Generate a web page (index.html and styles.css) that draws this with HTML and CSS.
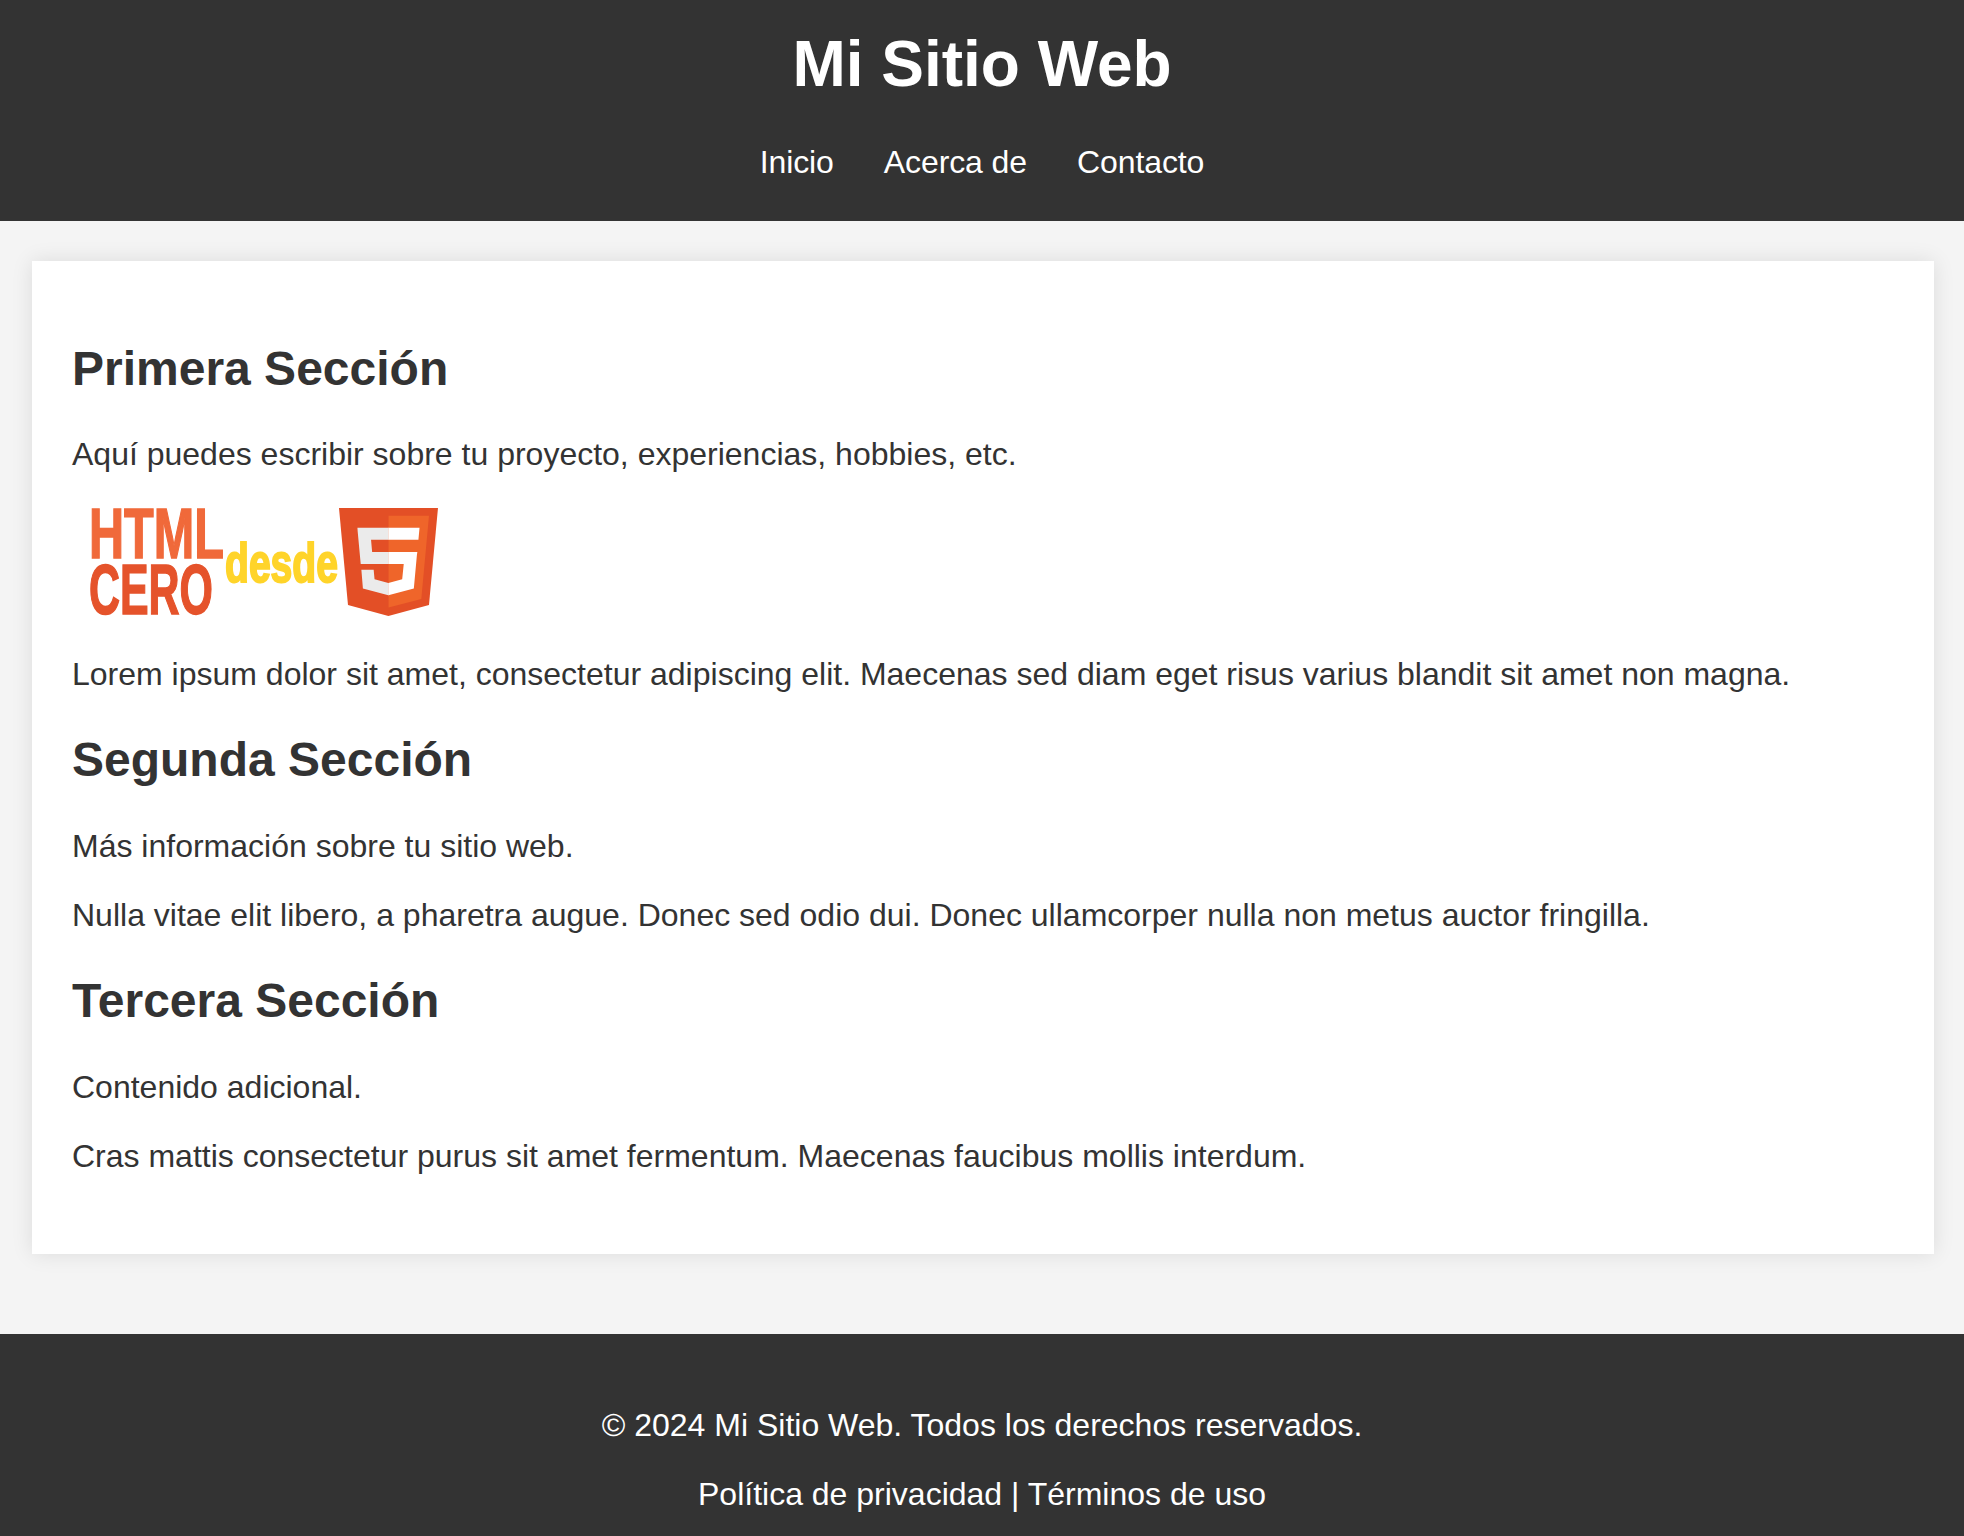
FILE: index.html
```html
<!DOCTYPE html>
<html lang="es">
<head>
  <meta charset="UTF-8" />
  <meta name="viewport" content="width=device-width, initial-scale=1" />
  <title>Mi Sitio Web</title>
  <link rel="stylesheet" href="styles.css">
</head>
<body>
  <header class="site-header">
    <h1>Mi Sitio Web</h1>
    <nav class="site-nav">
      <a href="#">Inicio</a>
      <a href="#">Acerca de</a>
      <a href="#">Contacto</a>
    </nav>
  </header>

  <main class="card">
    <section>
      <h2>Primera Sección</h2>
      <p>Aquí puedes escribir sobre tu proyecto, experiencias, hobbies, etc.</p>
      <svg class="logo" viewBox="0 0 370 118" role="img" aria-label="HTML desde cero">
        <g class="logo-art">
          <text class="logo-big" x="17" y="53" textLength="135" lengthAdjust="spacingAndGlyphs" fill="#f0693a" stroke="#f0693a">HTML</text>
          <text class="logo-big" x="17" y="109" textLength="124" lengthAdjust="spacingAndGlyphs" fill="#e5532b" stroke="#e5532b">CERO</text>
          <text class="logo-small" x="153" y="77" textLength="113" lengthAdjust="spacingAndGlyphs" fill="#ffd42a" stroke="#ffd42a">desde</text>
          <g transform="translate(260.4 3) scale(0.2195 0.211)">
            <polygon fill="#e34f26" points="71,460 30,0 481,0 440,460 255,512"/>
            <polygon fill="#ef652a" points="256,472 405,431 440,37 256,37"/>
            <polygon fill="#ebebeb" points="256,208 181,208 176,150 256,150 256,94 114,94 115,109 129,265 256,265"/>
            <polygon fill="#ebebeb" points="256,355 255,355 192,338 188,293 132,293 139,382 255,414 256,414"/>
            <polygon fill="#ffffff" points="255,208 255,265 325,265 318,338 255,355 255,414 371,382 385,223 387,208"/>
            <polygon fill="#ffffff" points="255,94 255,150 392,150 397,94"/>
          </g>
        </g>
      </svg>
      <p>Lorem ipsum dolor sit amet, consectetur adipiscing elit. Maecenas sed diam eget risus varius blandit sit amet non magna.</p>
    </section>
    <section>
      <h2>Segunda Sección</h2>
      <p>Más información sobre tu sitio web.</p>
      <p>Nulla vitae elit libero, a pharetra augue. Donec sed odio dui. Donec ullamcorper nulla non metus auctor fringilla.</p>
    </section>
    <section>
      <h2>Tercera Sección</h2>
      <p>Contenido adicional.</p>
      <p>Cras mattis consectetur purus sit amet fermentum. Maecenas faucibus mollis interdum.</p>
    </section>
  </main>

  <footer class="site-footer">
    <p>© 2024 Mi Sitio Web. Todos los derechos reservados.</p>
    <p><a href="#">Política de privacidad</a> | <a href="#">Términos de uso</a></p>
  </footer>
</body>
</html>
```

FILE: styles.css
```css
html, body {
  height: 1536px;
  overflow: hidden;
}

body {
  margin: 0;
  background-color: #f4f4f4;
  font-family: "Liberation Sans", Arial, sans-serif;
  font-size: 32px;
  line-height: 37px;
  color: #333;
}

.site-header {
  background: #333;
  color: #fff;
  text-align: center;
  height: 221px;
  padding-top: 25px;
  box-sizing: border-box;
}

h1 {
  margin: 0;
  font-size: 64px;
  line-height: 78px;
}

.site-nav {
  display: flex;
  justify-content: center;
  gap: 50px;
  margin-top: 41px;
  letter-spacing: -0.1px;
}

a {
  color: #fff;
  text-decoration: none;
}

.card {
  margin: 40px 30px 80px 32px;
  padding: 41px 40px 40px;
  background: #fff;
  box-shadow: 0 0 20px rgba(0,0,0,0.1);
}

section {
  margin-bottom: 39px;
}

section:last-child {
  margin-bottom: 0;
  padding-bottom: 7px;
}

h2 {
  margin: 39px 0 41px;
  font-size: 48px;
  line-height: 55px;
  color: #333;
}

section:first-child h2 {
  margin-bottom: 40px;
}

p {
  margin: 32px 0;
}

.logo {
  display: block;
  width: 370px;
  height: 118px;
  margin-bottom: 33px;
}

.logo-art {
  filter: blur(0.7px);
}

.logo-big {
  font-family: "Liberation Sans Narrow", "Liberation Sans", sans-serif;
  font-size: 70px;
  font-weight: bold;
  stroke-width: 1.5px;
}

.logo-small {
  font-family: "Liberation Sans Narrow", "Liberation Sans", sans-serif;
  font-size: 55px;
  font-weight: bold;
  stroke-width: 2px;
}

.site-footer {
  background: #333;
  color: #fff;
  text-align: center;
  padding: 41px 0 40px;
  overflow: hidden;
}
```
